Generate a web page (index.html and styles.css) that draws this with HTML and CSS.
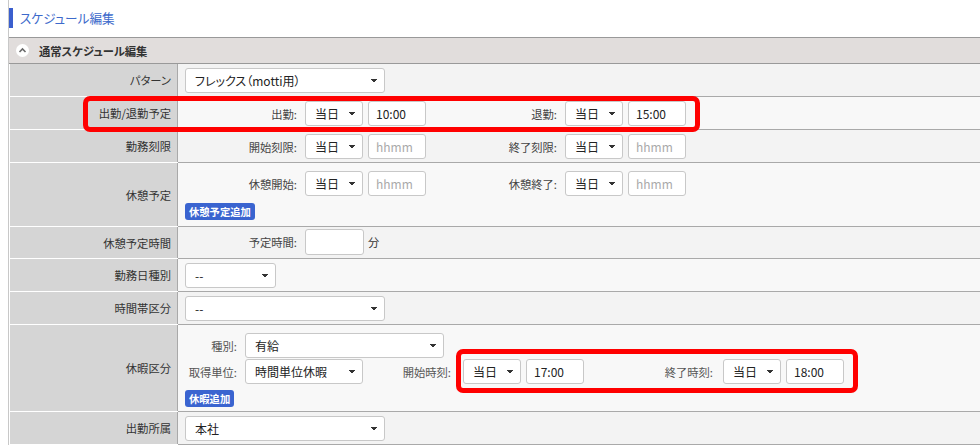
FILE: index.html
```html
<!DOCTYPE html>
<html lang="ja">
<head>
    <meta charset="UTF-8">
    <meta name="viewport" content="width=device-width, initial-scale=1.0">
    <title>スケジュール編集</title>
    <link rel="stylesheet" href="styles.css">
</head>
<body>
    <div class="page">
        <h1 class="page-title">スケジュール編集</h1>

        <div class="section-head">
            <svg class="toggle" width="13" height="13" viewBox="0 0 13 13">
                <circle cx="6.5" cy="6.5" r="6.5" fill="#fff"/>
                <polyline points="3.5,8 6.5,5 9.5,8" fill="none" stroke="#6a6a6a" stroke-width="1.6"/>
            </svg>
            <span>通常スケジュール編集</span>
        </div>

        <table class="form-table">
            <tr>
                <th>パターン</th>
                <td>
                    <select class="sel w-200"><option>フレックス（motti用）</option></select>
                </td>
            </tr>
            <tr>
                <th>出勤/退勤予定</th>
                <td>
                    <div class="fields">
                        <div class="field">
                            <label class="field-label">出勤:</label>
                            <select class="sel day"><option>当日</option></select>
                            <input class="time" type="text" value="10:00">
                        </div>
                        <div class="field">
                            <label class="field-label">退勤:</label>
                            <select class="sel day"><option>当日</option></select>
                            <input class="time" type="text" value="15:00">
                        </div>
                    </div>
                </td>
            </tr>
            <tr>
                <th>勤務刻限</th>
                <td>
                    <div class="fields">
                        <div class="field">
                            <label class="field-label">開始刻限:</label>
                            <select class="sel day"><option>当日</option></select>
                            <input class="time" type="text" placeholder="hhmm">
                        </div>
                        <div class="field">
                            <label class="field-label">終了刻限:</label>
                            <select class="sel day"><option>当日</option></select>
                            <input class="time" type="text" placeholder="hhmm">
                        </div>
                    </div>
                </td>
            </tr>
            <tr>
                <th>休憩予定</th>
                <td class="stack">
                    <div class="fields">
                        <div class="field">
                            <label class="field-label">休憩開始:</label>
                            <select class="sel day"><option>当日</option></select>
                            <input class="time" type="text" placeholder="hhmm">
                        </div>
                        <div class="field">
                            <label class="field-label">休憩終了:</label>
                            <select class="sel day"><option>当日</option></select>
                            <input class="time" type="text" placeholder="hhmm">
                        </div>
                    </div>
                    <button type="button" class="btn-add">休憩予定追加</button>
                </td>
            </tr>
            <tr>
                <th>休憩予定時間</th>
                <td class="minutes-cell">
                    <div class="field">
                        <label class="field-label">予定時間:</label>
                        <input class="minutes" type="text">
                        <span class="unit">分</span>
                    </div>
                </td>
            </tr>
            <tr>
                <th>勤務日種別</th>
                <td>
                    <select class="sel w-91"><option>--</option></select>
                </td>
            </tr>
            <tr>
                <th>時間帯区分</th>
                <td>
                    <select class="sel w-200"><option>--</option></select>
                </td>
            </tr>
            <tr>
                <th>休暇区分</th>
                <td class="leave-cell">
                    <div class="leave-line">
                        <label class="leave-label">種別:</label>
                        <select class="sel w-199"><option>有給</option></select>
                    </div>
                    <div class="leave-line">
                        <label class="leave-label">取得単位:</label>
                        <select class="sel w-118"><option>時間単位休暇</option></select>
                        <label class="time-label start">開始時刻:</label>
                        <select class="sel day"><option>当日</option></select>
                        <input class="time" type="text" value="17:00">
                        <label class="time-label end">終了時刻:</label>
                        <select class="sel day"><option>当日</option></select>
                        <input class="time" type="text" value="18:00">
                    </div>
                    <button type="button" class="btn-add">休暇追加</button>
                </td>
            </tr>
            <tr>
                <th>出勤所属</th>
                <td>
                    <select class="sel w-200"><option>本社</option></select>
                </td>
            </tr>
        </table>
    </div>

    <!-- red highlight marks from the manual screenshot -->
    <div class="mark mark-plan"></div>
    <div class="mark mark-leave"></div>
</body>
</html>
```

FILE: styles.css
```css
body {
    margin: 0;
    position: relative;
    font-family: "Noto Sans CJK JP", sans-serif;
    font-feature-settings: "palt";
    color: #333;
    background-color: #fff;
}

.page {
    margin-left: 8px;
    border-left: 1px solid #c8c8c8;
    min-height: 445px;
    padding-top: 8px;
    box-sizing: border-box;
}

.page-title {
    margin: 0 0 9px 0;
    height: 20px;
    line-height: 20px;
    padding-left: 7px;
    border-left: 4px solid #3b5fce;
    font-size: 12.6px;
    font-weight: normal;
    color: #3d6acb;
}

.section-head {
    display: flex;
    align-items: center;
    height: 25px;
    padding-left: 7px;
    border-top: 1px solid #999;
    border-bottom: 1px solid #999;
    background-color: #e1dddc;
    font-size: 11.3px;
    font-weight: bold;
    color: #333;
}

.toggle {
    margin-right: 10px;
}

.form-table {
    margin-left: 1px;
    width: calc(100% - 1px);
    border-collapse: collapse;
    font-size: 11.3px;
}

.form-table th {
    width: 161px;
    padding: 0 6px 0 0;
    text-align: right;
    font-weight: normal;
    color: #333;
    background-color: #d5d5d5;
    border-bottom: 1px solid #fff;
    border-right: 1px solid #a9a9a9;
}

.form-table td {
    padding: 4px 7px 3px 7px;
    border-bottom: 1px solid #a9a9a9;
    vertical-align: middle;
}

.form-table tr:nth-child(odd) td {
    background-color: #f3f3f3;
}

.form-table tr:nth-child(even) td {
    background-color: #f8f8f8;
}

.sel {
    -webkit-appearance: none;
    appearance: none;
    height: 25px;
    box-sizing: border-box;
    padding: 0 20px 0 9px;
    border: 1px solid #c8c8c8;
    border-radius: 3px;
    background-color: #fff;
    background-image: linear-gradient(45deg, transparent 50%, #333 50%), linear-gradient(135deg, #333 50%, transparent 50%);
    background-position: calc(100% - 10px) 50%, calc(100% - 7px) 50%;
    background-size: 3px 4px;
    background-repeat: no-repeat;
    font-family: inherit;
    font-feature-settings: "palt";
    font-size: 12px;
    color: #222;
    vertical-align: middle;
}

.w-200 { width: 200px; }
.w-199 { width: 199px; }
.w-118 { width: 118px; }
.w-91 { width: 91px; }
.day { width: 58px; }

.time {
    width: 58px;
    height: 25px;
    box-sizing: border-box;
    margin-left: 5px;
    padding: 0 7px;
    border: 1px solid #c8c8c8;
    border-radius: 3px;
    background-color: #fff;
    font-family: inherit;
    font-size: 12px;
    color: #222;
}

.time::placeholder {
    color: #aaa;
}

.fields {
    display: flex;
}

.field {
    display: flex;
    align-items: center;
    width: 260px;
}

.field-label {
    width: 112px;
    margin-right: 8px;
    text-align: right;
    color: #444;
}

.form-table td.stack {
    padding-top: 8px;
    padding-bottom: 6px;
}

.stack .fields {
    margin-bottom: 7px;
}

.btn-add {
    display: block;
    height: 17px;
    padding: 0 4px;
    border: none;
    border-radius: 3px;
    background-color: #3a64d0;
    color: #fff;
    font-family: inherit;
    font-feature-settings: "palt";
    font-size: 10.3px;
    font-weight: bold;
    line-height: 17px;
}

.form-table td.minutes-cell {
    padding-top: 2px;
    padding-bottom: 3px;
}

.minutes {
    width: 59px;
    height: 26px;
    box-sizing: border-box;
    border: 1px solid #c8c8c8;
    border-radius: 3px;
    background-color: #fff;
}

.unit {
    margin-left: 4px;
}

.form-table td.leave-cell {
    padding-top: 8px;
    padding-bottom: 4px;
}

.leave-line {
    display: flex;
    align-items: center;
    margin-bottom: 1px;
}

.leave-line:nth-child(2) {
    margin-bottom: 6px;
}

.leave-label {
    width: 52px;
    margin-right: 8px;
    text-align: right;
    white-space: nowrap;
    color: #555;
}

.time-label {
    text-align: right;
    color: #555;
}

.time-label.start {
    width: 88px;
    margin-right: 12px;
}

.time-label.end {
    width: 129px;
    margin-right: 10px;
}

.mark {
    position: absolute;
    box-sizing: border-box;
    border: 5px solid #f00;
    border-radius: 7px;
    pointer-events: none;
}

.mark-plan {
    left: 83px;
    top: 96px;
    width: 617px;
    height: 36px;
}

.mark-leave {
    left: 456px;
    top: 349px;
    width: 402px;
    height: 44px;
}
```
